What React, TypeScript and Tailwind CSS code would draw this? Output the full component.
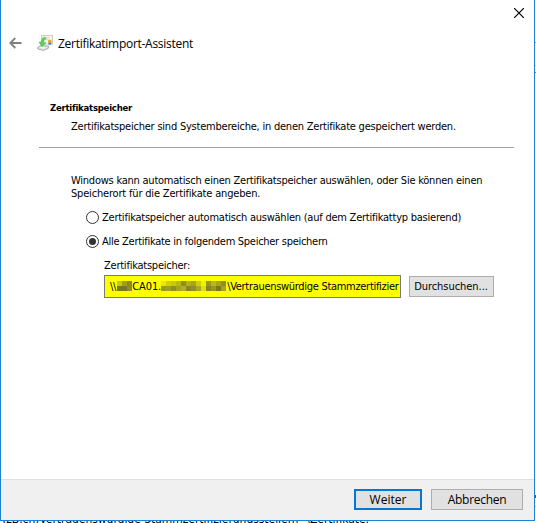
import React from "react";

const BackIcon = () => (
    <svg width="13" height="12" viewBox="0 0 13 12" fill="none" stroke="#808080" strokeWidth="1.8">
        <path d="M12.5 6H1.5M6.3 1L1.3 6l5 5" />
    </svg>
);

const CloseIcon = () => (
    <svg width="10" height="10" viewBox="0 0 10 10" fill="none" stroke="#000" strokeWidth="1.2">
        <path d="M0 0l10 10M10 0L0 10" />
    </svg>
);

const CertificateIcon = () => (
    <svg width="16" height="16" viewBox="0 0 16 16">
        <rect x="4.5" y="0.5" width="11" height="8.5" fill="#f7f5ec" stroke="#d2cbb4" />
        <path d="M7 2.7h6M8.5 4.5h3" stroke="#cbd3dc" strokeWidth="0.8" />
        <path d="M0.5 12.5l3.5-2.2 8 .8-.8 2.4-4.7 2-5.7-1.5z" fill="#d5d8da" stroke="#9b9fa2" strokeWidth="0.7" />
        <path d="M2.3 12.8l2.5-1.2 4.5.6-2.5 1.7z" fill="#f5f6f6" />
        <path d="M7.8 2.2C5.3 2.5 4.2 4.5 4.3 7H2l3 4.7L9 7.8H6.8c-.2-2 .3-3.4 2.5-4.4z" fill="#4fd653" stroke="#4aae55" strokeWidth="0.5" />
        <path d="M11.5 7v3l1.3-.8 1.4.8V7z" fill="#3878c8" />
        <circle cx="12.8" cy="6.2" r="1.8" fill="#f5a21b" />
    </svg>
);

const Radio = (props: { checked?: boolean }) => (
    <svg className="shrink-0" width="13" height="13" viewBox="0 0 13 13">
        <circle cx="6.5" cy="6.5" r="6" fill="#fff" stroke="#333" />
        {props.checked && <circle cx="6.5" cy="6.5" r="3.5" fill="#333" />}
    </svg>
);

// pixelated parts of the server name: upper and lower colour of each 5px block
const hostBlocks = [["#c8c808", "#77771c"], ["#a0a010", "#77771c"], ["#8a8a18", "#8e8e18"]];
const domainBlocks = [
    ["#e8e800", "#98981c"], ["#d0d008", "#a0a01c"], ["#c8c808", "#8f8f20"], ["#b8b810", "#a5a51c"],
    ["#8f8f20", "#b2b218"], ["#b2b218", "#86861c"], ["#a5a51c", "#8f8f20"], ["#d0d008", "#aaaa18"],
    ["#f0f000", "#e0e000"], ["#98981c", "#86861c"], ["#b8b810", "#98981c"], ["#a5a51c", "#77771c"], ["#8f8f20", "#a5a51c"],
];

const Blocks = (props: { colors: string[][] }) => (
    <span className="flex shrink-0">
        {props.colors.map(([top, bottom], i) => (
            <span key={i} className="flex w-[5px] flex-col">
                <span className="h-[5px]" style={{ backgroundColor: top }} />
                <span className="h-[5px]" style={{ backgroundColor: bottom }} />
            </span>
        ))}
    </span>
);

export default function App() {
    return (
        <div className="relative h-[523px] w-[536px] overflow-hidden bg-white font-['DejaVu_Sans_Condensed','DejaVu_Sans',sans-serif] text-[11px] leading-[13px] font-stretch-condensed tracking-[-0.235px] text-black select-none">
            <div className="flex h-[521px] w-[535px] flex-col border-x border-b border-[#1883d7] bg-white">
                <div className="flex h-[26px] items-center justify-end pr-[10px]">
                    <CloseIcon />
                </div>
                <div className="flex h-[34px] items-center pl-2">
                    <BackIcon />
                    <span className="ml-[15px]"><CertificateIcon /></span>
                    <h1 className="mt-px ml-[5px] font-['Open_Sans',sans-serif] text-[12px] leading-4 font-stretch-normal tracking-[-0.28px] whitespace-nowrap">Zertifikatimport-Assistent</h1>
                </div>

                <div className="flex grow flex-col pt-[41px] pr-5 pl-[38px] whitespace-nowrap">
                    <h2 className="pl-[11px] text-[9.5px] font-bold tracking-[-0.25px]">Zertifikatspeicher</h2>
                    <p className="mt-[6px] pl-8 tracking-[-0.22px]">Zertifikatspeicher sind Systembereiche, in denen Zertifikate gespeichert werden.</p>
                    <hr className="mt-[14px] border-t border-[#a0a0a0]" />

                    <div className="mt-[26px] pl-8">
                        <p>Windows kann automatisch einen Zertifikatspeicher auswählen, oder Sie können einen</p>
                        <p className="tracking-[-0.18px]">Speicherort für die Zertifikate angeben.</p>
                    </div>

                    <label className="mt-[11px] flex items-center gap-[3px] pl-[47px]">
                        <Radio />
                        <span>Zertifikatspeicher automatisch auswählen (auf dem Zertifikattyp basierend)</span>
                    </label>
                    <label className="mt-[11px] flex items-center gap-[3px] pl-[47px]">
                        <Radio checked />
                        <span className="tracking-[-0.28px]">Alle Zertifikate in folgendem Speicher speichern</span>
                    </label>

                    <div className="mt-[11px] pl-[65px]">
                        <p>Zertifikatspeicher:</p>
                        <div className="mt-[3px] flex items-start">
                            <div className="flex h-[23px] w-[297px] items-center border border-[#7a7a7a] bg-[#ffff00] pr-px pl-[5px]">
                                <div className="flex grow items-center pb-px">
                                    <span>\\</span>
                                    <span className="ml-px"><Blocks colors={hostBlocks} /></span>
                                    <span className="tracking-[-0.1px]">CA01.</span>
                                    <Blocks colors={domainBlocks} />
                                    <span className="ml-px tracking-[-0.3px]">\Vertrauenswürdige Stammzertifizier</span>
                                </div>
                            </div>
                            <button className="mt-px ml-2 h-[21px] w-[85px] border border-[#adadad] bg-[#e1e1e1] pr-px tracking-[-0.05px]">Durchsuchen...</button>
                        </div>
                    </div>
                </div>

                <div className="flex h-[41px] shrink-0 justify-end gap-[9px] border-t border-[#dfdfdf] bg-[#f0f0f0] pt-[9px] pr-[11px] font-['Open_Sans',sans-serif] text-[12px] leading-4 font-stretch-normal tracking-normal">
                    <button className="h-[21px] w-[68px] border-2 border-[#0078d7] bg-[#e1e1e1]">Weiter</button>
                    <button className="h-[21px] w-[92px] border border-[#adadad] bg-[#e1e1e1] tracking-[-0.3px]">Abbrechen</button>
                </div>
            </div>

            {/* page behind the dialog */}
            <div className="flex h-[2px] items-end overflow-hidden pl-[2px] text-[12px] tracking-[-0.04px] whitespace-nowrap">
                <span className="-mb-[3px]">(zB.ch)Vertrauenswürdige Stammzertifizierungsstellen\" \Zertifikate.</span>
            </div>
            <div className="absolute top-[42px] right-0 h-px w-px bg-[#6da9dc]" />
            <div className="absolute top-[65px] right-0 h-px w-px bg-[#b9cfe2]" />
            <div className="absolute top-[72px] right-0 h-px w-px bg-[#5b8fbd]" />
            <div className="absolute top-[495px] right-0 h-[3px] w-px bg-[#505050]" />
            <div className="absolute top-[506px] right-0 h-px w-px bg-[#b9cfe2]" />
        </div>
    );
}
